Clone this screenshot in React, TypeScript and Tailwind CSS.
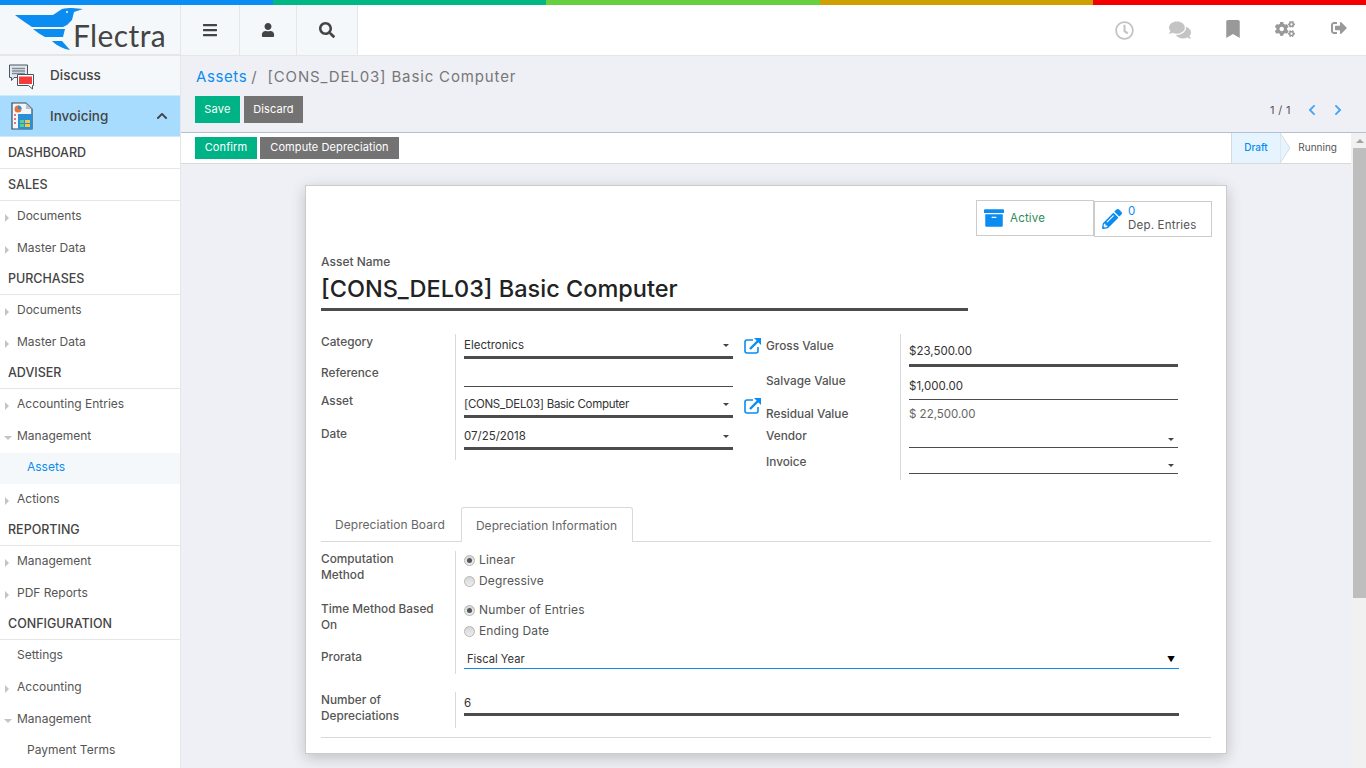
import type { ReactNode } from "react";
import {
  FaArchive,
  FaBars,
  FaBookmark,
  FaChevronLeft,
  FaChevronRight,
  FaChevronUp,
  FaCogs,
  FaComments,
  FaPencilAlt,
  FaRegClock,
  FaSearch,
  FaSignOutAlt,
  FaUser,
} from "react-icons/fa";

function Logo() {
  return (
    <div className="relative h-[50px] w-[181px] shrink-0 border-r border-b border-[#e6e6e6] bg-[#f5f8fa]">
      <svg className="absolute left-0 top-0" width="90" height="50" viewBox="0 0 90 50">
        <path d="M15 10 H53 L62 4 C65 3 69 3 72 3 L83 4 L74 7 L72 15 L67 20 L63 22 H32 C26 18 20 14 15 10 Z" fill="#0a8cf0" />
        <circle cx="67" cy="7" r="1" fill="#fff" />
        <path d="M33 24 H65 L63 32 H45 C41 30 37 27 33 24 Z" fill="#0a8cf0" />
        <path d="M52 36 H62 L70 45 C64 44 57 41 52 36 Z" fill="#0a8cf0" />
      </svg>
      <span className="absolute left-[73px] top-[12px] font-['Lato'] text-[30px] leading-[36px] font-normal tracking-[0.4px] text-[#444]">
        Flectra
      </span>
    </div>
  );
}

function SideHeader({ children }: { children: ReactNode }) {
  return (
    <div className="h-8 border-b border-[#e6e6e6] pl-2 pt-[8px] text-[12.5px] leading-4 font-medium text-[#444]">
      {children}
    </div>
  );
}

function SideItem({ label, open, plain }: { label: string; open?: boolean; plain?: boolean }) {
  return (
    <div className="relative h-8 pl-[17px] pt-[7px] text-[12px] leading-4 text-[#555]">
      {!plain && !open && (
        <span className="absolute left-[5px] top-[13px] h-0 w-0 border-y-[4px] border-l-[4px] border-y-transparent border-l-[#c4c4c4]" />
      )}
      {open && (
        <span className="absolute left-[4px] top-[15px] h-0 w-0 border-x-[4px] border-t-[4px] border-x-transparent border-t-[#c4c4c4]" />
      )}
      {label}
    </div>
  );
}

function Sidebar() {
  return (
    <aside className="w-[181px] shrink-0 overflow-hidden border-r border-[#e6e6e6] bg-white font-['Inter']">
      <div className="flex h-[39px] items-center bg-[#f5f8fa]">
        <svg className="ml-[8px]" width="28" height="28" viewBox="0 0 28 28">
          <path d="M1.5 3 H19.5 V15.5 H6 L3.5 18.5 V15.5 H1.5 Z" fill="#e3e8ee" stroke="#4a5560" strokeWidth="1" />
          <path d="M4 6.5 H17 M4 9 H17 M4 11.5 H17" stroke="#7f8b97" strokeWidth="1.4" />
          <path d="M9.5 12.5 H25.5 V23.5 H24.5 V27 L20.5 23.5 H9.5 Z" fill="#fff" stroke="#4a5560" strokeWidth="1" />
          <rect x="11" y="14.5" width="13" height="7.5" fill="#f53c3c" />
        </svg>
        <span className="ml-[14px] text-[13.5px] font-medium text-[#444]">Discuss</span>
      </div>
      <div className="flex h-[42px] items-center border-y border-[#cdeafd] bg-[#a8dcff]">
        <svg className="ml-[11px]" width="22" height="28" viewBox="0 0 22 28">
          <path d="M1 1 H15 L21 7 V27 H1 Z" fill="#f2f6fa" stroke="#2f4a60" strokeWidth="1.2" />
          <path d="M15 1 V7 H21 Z" fill="#b9c2cc" />
          <circle cx="7" cy="7" r="3.5" fill="#e8743b" />
          <path d="M7 7 V3.5 A3.5 3.5 0 0 1 10.5 7 Z" fill="#2a8fd8" />
          <rect x="7" y="12" width="14" height="15" fill="#2a8fd8" />
          <rect x="9" y="18" width="4" height="3" fill="#5ad08c" />
          <rect x="14" y="18" width="5" height="3" fill="#f5c842" />
          <rect x="9" y="22" width="4" height="3" fill="#5ad08c" />
          <rect x="14" y="22" width="5" height="3" fill="#f5c842" />
          <path d="M4 12 V14 M4 16 V18 M4 20 V22" stroke="#e24b4b" strokeWidth="1.5" />
        </svg>
        <span className="ml-[17px] flex-1 text-[13.5px] font-medium text-[#444]">Invoicing</span>
        <FaChevronUp className="mr-[12px] text-[12px] text-[#444]" />
      </div>
      <SideHeader>DASHBOARD</SideHeader>
      <SideHeader>SALES</SideHeader>
      <div className="-mb-0.5">
        <SideItem label="Documents" />
        <SideItem label="Master Data" />
      </div>
      <SideHeader>PURCHASES</SideHeader>
      <div className="-mb-0.5">
        <SideItem label="Documents" />
        <SideItem label="Master Data" />
      </div>
      <SideHeader>ADVISER</SideHeader>
      <SideItem label="Accounting Entries" />
      <SideItem label="Management" open />
      <div className="h-[31px] bg-[#f5f8fa] pl-[27px] pt-[6px] text-[12px] leading-4 text-[#0a8cf0]">Assets</div>
      <div className="-mb-0.5">
        <SideItem label="Actions" />
      </div>
      <SideHeader>REPORTING</SideHeader>
      <div className="-mb-0.5">
        <SideItem label="Management" />
        <SideItem label="PDF Reports" />
      </div>
      <SideHeader>CONFIGURATION</SideHeader>
      <SideItem label="Settings" plain />
      <SideItem label="Accounting" />
      <SideItem label="Management" open />
      <div className="pl-[27px] pt-[6px] text-[12px] leading-4 text-[#555]">Payment Terms</div>
    </aside>
  );
}

function ExternalIcon() {
  return (
    <svg className="block" width="18" height="18" viewBox="0 0 18 18" fill="none" stroke="#0a8cf0" strokeWidth="1.6">
      <path d="M9 3 H3 Q1 3 1 5 V14 Q1 16 3 16 H12 Q14 16 14 14 V10" />
      <path d="M6 12 L14 4" strokeWidth="2.4" />
      <path d="M10 1 H17 V8 Z" fill="#0a8cf0" stroke="none" />
    </svg>
  );
}

function Caret() {
  return (
    <span className="mr-[4px] block h-0 w-0 border-x-[3px] border-t-[3px] border-x-transparent border-t-[#444]" />
  );
}

function Value({
  text,
  thick,
  caret,
  gap,
  tight,
}: {
  text?: string;
  thick?: boolean;
  caret?: boolean;
  gap: string;
  tight?: boolean;
}) {
  return (
    <div className={`flex w-[269px] items-center justify-between ${thick ? "border-b-[3px]" : "border-b"} border-[#4c4c4c] ${gap}`}>
      <span className={`text-[11.5px] leading-4 text-[#333] ${tight ? "tracking-[-0.3px]" : ""}`}>{text ?? "\u00a0"}</span>
      {caret && <Caret />}
    </div>
  );
}

function Row({
  label,
  height,
  labelPad,
  iconPad,
  children,
}: {
  label?: ReactNode;
  height: string;
  labelPad?: string;
  iconPad?: string;
  children?: ReactNode;
}) {
  return (
    <div className={`flex ${height}`}>
      <div className={`w-[134px] shrink-0 ${labelPad ?? ""} text-[11.8px] leading-4 font-medium text-[#555]`}>
        {label}
      </div>
      <div className="flex items-end border-l border-[#d9d9d9] pl-2">{children}</div>
      {iconPad && (
        <div className={`ml-[11px] ${iconPad}`}>
          <ExternalIcon />
        </div>
      )}
    </div>
  );
}

function Radio({ label, on }: { label: string; on?: boolean }) {
  return (
    <div className="flex h-[21px] items-center pb-[3px] text-[12px] tracking-[0.15px] text-[#555]">
      <span className="mr-[4px] flex h-[11px] w-[11px] items-center justify-center rounded-full border border-[#b5b5b5] bg-gradient-to-b from-[#d6d6d6] to-[#eeeeee]">
        {on && <span className="h-[5px] w-[5px] rounded-full bg-[#555]" />}
      </span>
      {label}
    </div>
  );
}

function AssetForm() {
  return (
    <div className="relative mx-auto mt-[21px] h-[569px] w-[922px] shrink-0 border border-[#ccc] bg-white shadow-[0_4px_14px_rgba(0,0,0,0.2)]">
      <div className="flex justify-end pt-[14px] pr-[14px]">
        <div className="flex h-9 w-[118px] items-center border border-[#ccc] pl-[7px]">
          <FaArchive className="text-[20px] text-[#0a8cf0]" />
          <span className="ml-[6px] pt-[2px] text-[11.5px] tracking-[0.2px] text-[#2e8b57]">Active</span>
        </div>
        <div className="mt-px flex h-9 w-[118px] items-center border border-[#ccc] pl-[7px]">
          <FaPencilAlt className="text-[20px] text-[#0a8cf0]" />
          <div className="ml-[6px] pb-[2px] text-[11.5px] leading-[14px] tracking-[0.2px] text-[#555]">
            <div className="text-[#0a8cf0]">0</div>
            Dep. Entries
          </div>
        </div>
      </div>

      <div className="px-[15px] pt-[17px]">
        <div className="text-[12px] leading-4 font-medium text-[#555]">Asset Name</div>
        <div className="mt-[2px] w-[647px] border-b-[3px] border-[#4c4c4c] pb-[2px] text-[23.5px] leading-[34px] font-medium text-[#222]">
          [CONS_DEL03] Basic Computer
        </div>

        <div className="mt-[23px] flex">
          <div className="w-[445px] shrink-0">
            <Row height="h-[25px]" label="Category" iconPad="pt-[3px]">
              <Value text="Electronics" thick caret gap="pb-[3px]" />
            </Row>
            <Row height="h-[28px]" labelPad="pt-[6px]" label="Reference">
              <Value gap="pb-0" />
            </Row>
            <Row height="h-[31px]" labelPad="pt-[6px]" label="Asset" iconPad="pt-[10px]">
              <Value text="[CONS_DEL03] Basic Computer" thick caret gap="pb-[3px]" tight />
            </Row>
            <Row height="h-[32px]" labelPad="pt-[8px]" label="Date">
              <Value text="07/25/2018" thick caret gap="pb-[3px]" />
            </Row>
            <Row height="h-[10px]" />
          </div>
          <div>
            <Row height="h-[33px]" labelPad="pt-[4px]" label="Gross Value">
              <Value text="$23,500.00" thick gap="pb-[5px]" />
            </Row>
            <Row height="h-[33px]" labelPad="pt-[6px]" label="Salvage Value">
              <Value text="$1,000.00" gap="pb-[5px]" />
            </Row>
            <Row height="h-[25px]" labelPad="pt-[6px]" label="Residual Value">
              <span className="self-start pt-[6px] text-[11.5px] leading-4 text-[#666]">$ 22,500.00</span>
            </Row>
            <Row height="h-[23px]" labelPad="pt-[3px]" label="Vendor">
              <Value caret gap="pb-0" />
            </Row>
            <Row height="h-[26px]" labelPad="pt-[6px]" label="Invoice">
              <Value caret gap="pb-0" />
            </Row>
            <Row height="h-[6px]" />
          </div>
        </div>

        <div className="mt-[27px] flex h-[35px] w-[890px] border-b border-[#d9d9d9] text-[12px] tracking-[0.05px] text-[#666]">
          <div className="flex w-[140px] items-center pl-[14px] pt-px">Depreciation Board</div>
          <div className="flex h-[35px] w-[172px] items-center justify-center rounded-t-[3px] border-x border-t border-[#d9d9d9] bg-white pr-px pt-px">
            Depreciation Information
          </div>
        </div>

        <div className="mt-[9px]">
          <Row height="h-[50px]" label={<>Computation<br />Method</>} />
          <div className="-mt-[50px] ml-[134px] border-l border-[#d9d9d9] pl-2">
            <Radio label="Linear" on />
            <Radio label="Degressive" />
          </div>
          <div className="flex h-[8px]"><div className="w-[134px]" /><div className="border-l border-[#d9d9d9]" /></div>
          <Row height="h-[42px]" label={<>Time Method Based<br />On</>} />
          <div className="-mt-[42px] ml-[134px] border-l border-[#d9d9d9] pl-2">
            <Radio label="Number of Entries" on />
            <Radio label="Ending Date" />
          </div>
          <Row height="h-[31px]" labelPad="pt-[6px]" label="Prorata">
            <div className="mb-[5px] flex w-[715px] items-center justify-between border-b border-[#0a8cf0] pb-px pl-[3px] text-[11.2px] leading-4 text-[#333]">
              Fiscal Year
              <span className="mr-[4px] text-[8px] leading-none text-black">▼</span>
            </div>
          </Row>
          <div className="mt-[18px]">
            <Row height="h-[36px]" label={<>Number of<br />Depreciations</>}>
              <div className="mb-[12px] w-[715px] border-b-[3px] border-[#4c4c4c] pb-[2px] text-[11.5px] leading-4 text-[#333]">6</div>
            </Row>
          </div>
          <div className="mt-[9px] w-[890px] border-t border-[#d9d9d9]" />
        </div>
      </div>
    </div>
  );
}

export default function App() {
  return (
    <div className="flex h-screen flex-col overflow-hidden bg-[#eff0f5] font-['Inter']">
      <div className="flex h-[5px] shrink-0">
        <div className="flex-1 bg-[#0a8cf5]" />
        <div className="flex-1 bg-[#00b883]" />
        <div className="flex-1 bg-[#66d03f]" />
        <div className="flex-1 bg-[#d0a000]" />
        <div className="flex-1 bg-[#f50000]" />
      </div>

      <header className="flex h-[51px] shrink-0 border-b border-[#e6e6e6] bg-white">
        <Logo />
        <div className="flex h-[50px] w-[59px] items-center justify-center border-r border-[#e6e6e6] bg-[#f5f8fa] text-[#444]"><FaBars className="text-[16px]" /></div>
        <div className="flex h-[50px] w-[57px] items-center justify-center border-r border-[#e6e6e6] bg-[#f5f8fa] text-[#444]"><FaUser className="text-[14px]" /></div>
        <div className="flex h-[50px] w-[61px] items-center justify-center border-r border-[#e6e6e6] bg-[#f5f8fa] text-[#444]"><FaSearch className="text-[16px]" /></div>
        <div className="flex flex-1 items-center justify-end pr-[19px]">
          <FaRegClock className="mr-[35px] text-[19px] text-[#c4c4c4]" />
          <FaComments className="mr-[33px] text-[22px] text-[#c4c4c4]" />
          <FaBookmark className="mr-[33px] -translate-y-px text-[18px] text-[#999]" />
          <FaCogs className="mr-[36px] -translate-y-px text-[20px] text-[#999]" />
          <FaSignOutAlt className="-translate-y-[2px] text-[16px] text-[#999]" />
        </div>
      </header>

      <div className="flex min-h-0 flex-1">
        <Sidebar />
        <main className="flex min-w-0 flex-1 flex-col">
          <div className="h-[77px] shrink-0 border-b border-[#b4bfd6] pl-[14px] pr-[22px]">
            <div className="pl-px pt-[11px] text-[15px] leading-5 tracking-[0.85px] text-[#777]">
              <span className="tracking-[0.6px] text-[#0a8cf0]">Assets</span>
              <span className="ml-[4px] mr-[10px]">/</span>
              [CONS_DEL03] Basic Computer
            </div>
            <div className="mt-[9px] flex items-center">
              <button className="h-[27px] w-[45px] bg-[#00b386] text-[11px] tracking-[0.2px] text-white">Save</button>
              <button className="ml-[4px] h-[27px] w-[59px] bg-[#737373] text-[11px] tracking-[0.1px] text-white">Discard</button>
              <div className="ml-auto flex items-center pt-px text-[11px] text-[#555]">
                <span className="tracking-[0.4px]">1 / 1</span>
                <FaChevronLeft className="ml-[15px] text-[12px] text-[#49a6f5]" />
                <FaChevronRight className="ml-[14px] text-[12px] text-[#49a6f5]" />
              </div>
            </div>
          </div>

          <div className="flex min-h-0 flex-1">
            <div className="flex min-w-0 flex-1 flex-col">
              <div className="flex h-[31px] shrink-0 items-center border-b border-[#d9d9d9] bg-white pl-[14px]">
                <button className="h-[22px] w-[62px] bg-[#00b386] pb-px text-[11px] tracking-[0.1px] text-white">Confirm</button>
                <button className="ml-[3px] h-[22px] w-[139px] bg-[#737373] pb-px text-[11px] tracking-[0.1px] text-white">Compute Depreciation</button>
                <div className="ml-auto flex h-full items-center">
                  <div className="relative flex h-full w-[49px] items-center justify-center border-l border-[#d9d9d9] bg-[#e6f4ff] pb-px text-[10px] font-medium text-[#0a8cf0]">
                    Draft
                    <svg className="absolute top-0 -right-[10px]" width="10" height="30" viewBox="0 0 10 30">
                      <path d="M0 0 L10 15 L0 30 Z" fill="#e6f4ff" stroke="#d9d9d9" />
                    </svg>
                  </div>
                  <div className="flex h-full w-[71px] items-center justify-end pb-px pr-[14px] text-[10px] text-[#555]">Running</div>
                </div>
              </div>
              <div className="flex min-h-0 flex-1 flex-col overflow-hidden">
                <AssetForm />
              </div>
            </div>
            <div className="flex w-[15px] shrink-0 flex-col bg-[#f1f1f1] pl-[2px]">
              <div className="flex h-[15px] items-center justify-center">
                <span className="h-0 w-0 border-x-[4px] border-b-[4px] border-x-transparent border-b-[#a3a3a3]" />
              </div>
              <div className="h-[450px] bg-[#bebebe]" />
            </div>
          </div>
        </main>
      </div>
    </div>
  );
}
